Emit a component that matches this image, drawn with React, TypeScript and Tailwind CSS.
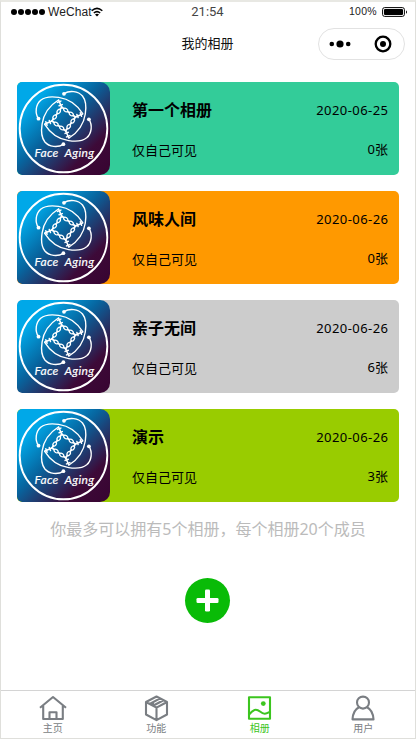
import React from "react";

type Album = { name: string; date: string; count: number; color: string };

const albums: Album[] = [
  { name: "第一个相册", date: "2020-06-25", count: 0, color: "bg-[#33cc99]" },
  { name: "风味人间", date: "2020-06-26", count: 0, color: "bg-[#ff9900]" },
  { name: "亲子无间", date: "2020-06-26", count: 6, color: "bg-[#cccccc]" },
  { name: "演示", date: "2020-06-26", count: 3, color: "bg-[#99cc00]" },
];

function Arm({ turn }: { turn: number }) {
  return (
    <g transform={`rotate(${turn})`}>
      <path d="M0.3 -25.3C6 -29 14.5 -28 18.8 -23C22 -19 22.7 -12 21.6 -5C20.4 3 16.5 12 5.3 19" strokeWidth="1.4" />
      <circle cx="0.3" cy="-25.2" r="1.9" fill="#fff" stroke="none" />
      <path d="M-5 -18.8L-2 -11.8" strokeWidth="1.6" />
      <path d="M-6.2 -16.6L-2.8 -17.9M-4.6 -13.2L-1.4 -14.4" strokeWidth="1.5" />
      <path d="M-2 -11.8L0 -10.4M3.9 -7.6L5.6 -6.4M9.5 -3.6L11.8 -2" strokeWidth="1.8" />
      <ellipse cx="2" cy="-9" rx="2.3" ry="1.5" transform="rotate(35 2 -9)" strokeWidth="1.3" />
      <ellipse cx="7.6" cy="-5" rx="2.3" ry="1.5" transform="rotate(35 7.6 -5)" strokeWidth="1.3" />
    </g>
  );
}

function Cover() {
  return (
    <div className="h-[93px] w-[93px] shrink-0 overflow-hidden rounded-l-[5px] rounded-r-[10px] bg-[linear-gradient(135deg,#00a8e8_20%,#07659f_45%,#3d0a38_76%,#370431_100%)]">
      <svg width="93" height="93" viewBox="0 0 93 93" fill="none" stroke="#fff" strokeLinecap="round">
        <circle cx="46.5" cy="46.5" r="43.8" strokeWidth="1.9" />
        <g transform="translate(46.7 37)">
          <Arm turn={0} />
          <Arm turn={90} />
          <Arm turn={180} />
          <Arm turn={270} />
        </g>
        <text
          x="17.5"
          y="74.6"
          fill="#fff"
          stroke="#fff"
          strokeWidth="0.2"
          fontSize="12"
          fontStyle="italic"
          textLength="59.5"
          wordSpacing="3"
          fontFamily="Lato, sans-serif"
        >
          Face Aging
        </text>
      </svg>
    </div>
  );
}

function AlbumCard({ album }: { album: Album }) {
  return (
    <div className={`flex h-[93px] overflow-hidden rounded-[5px] ${album.color}`}>
      <Cover />
      <div className="flex flex-1 justify-between pl-[22px] pr-[11px] text-black">
        <div className="flex flex-col pt-[17px]">
          <span className="text-[16px] font-bold leading-[22px]">{album.name}</span>
          <span className="mt-[19px] text-[13px] leading-[20px]">仅自己可见</span>
        </div>
        <div className="flex flex-col items-end pt-[18px] text-[13px] leading-5">
          <span className="-mr-[0.4px] tracking-[0.43px]">{album.date}</span>
          <span className="mt-[19px]">{album.count}张</span>
        </div>
      </div>
    </div>
  );
}

function StatusBar() {
  return (
    <div className="grid h-5 grid-cols-3 items-center pl-[10px] pr-[7px] font-['Liberation_Sans'] text-[12px] text-[#222]">
      <div className="flex items-center">
        <svg width="35" height="8" viewBox="0 0 35 8">
          <circle cx="3" cy="4" r="3" />
          <circle cx="10" cy="4" r="3" />
          <circle cx="17" cy="4" r="3" />
          <circle cx="24" cy="4" r="3" />
          <circle cx="31" cy="4" r="3" />
        </svg>
        <span className="ml-[2px] tracking-[0.1px]">WeChat</span>
        <svg className="-ml-px" width="12" height="10" viewBox="0 0 12 10" fill="none" stroke="#000" strokeWidth="1.5">
          <path d="M0.7 3.7Q6 -1 11.3 3.7M2.8 6Q6 3.2 9.2 6" />
          <path d="M4 7.4Q6 6 8 7.4L6 9.5Z" fill="#000" stroke="none" />
        </svg>
      </div>
      <span className="pr-1 text-center font-['Roboto'] text-[13px] text-[#444]">21:54</span>
      <div className="flex items-center justify-end">
        <span className="mr-[5px] text-[10.5px] tracking-[0.3px]">100%</span>
        <svg width="26" height="10" viewBox="0 0 26 10">
          <rect x="0.6" y="0.6" width="21.8" height="8.8" rx="2" fill="none" stroke="#000" />
          <rect x="2" y="2" width="19" height="6" rx="1" />
          <path d="M24 3.2Q26 5 24 6.8Z" />
        </svg>
      </div>
    </div>
  );
}

function NavBar() {
  return (
    <div className="grid h-[43px] grid-cols-[1fr_auto_1fr] items-center pl-[9px] pr-[10px]">
      <span />
      <span className="pb-[2px] text-[13px] leading-5 text-[#111]">我的相册</span>
      <div className="flex h-8 w-[87px] items-center justify-between justify-self-end rounded-full border border-[#e2e2e2] pl-[10px] pr-[12px]">
        <svg width="22" height="8" viewBox="0 0 22 8">
          <circle cx="2.8" cy="4" r="2.3" />
          <circle cx="11" cy="4" r="3.6" />
          <circle cx="19.2" cy="4" r="2.3" />
        </svg>
        <svg width="18" height="18" viewBox="0 0 18 18">
          <circle cx="9" cy="9" r="7.3" fill="none" stroke="#000" strokeWidth="2.3" />
          <circle cx="9" cy="9" r="3" />
        </svg>
      </div>
    </div>
  );
}

const tabs = [
  {
    label: "主页",
    active: false,
    icon: <path d="M1 12.8L14 2L27 12.8M4.2 10.5V24H23.8V10.5M10.5 24V17.2H17.5V24" />,
  },
  {
    label: "功能",
    active: false,
    icon: (
      <path d="M14.5 1.5L25 7V19.5L14.5 25.2L4 19.5V7ZM4 7L14.5 12.7L25 7M14.5 12.7V25.2M7.6 9L18.1 3.4M11 10.8L21.5 5.2M11 10.8V7.2" />
    ),
  },
  {
    label: "相册",
    active: true,
    icon: (
      <>
        <rect x="3" y="2.3" width="21" height="21.4" />
        <path d="M3 19.5C7 14.5 10 13.2 14 16.5S19.5 19 24 16.8" />
        <circle cx="17.3" cy="8.6" r="2.4" fill="currentColor" stroke="none" />
      </>
    ),
  },
  {
    label: "用户",
    active: false,
    icon: (
      <>
        <circle cx="14" cy="7.6" r="6" />
        <path d="M10 12.2C6 14.2 3.8 18.5 3.5 24.4H24.5C24.2 18.5 22 14.2 18 12.2" />
      </>
    ),
  },
];

function TabBar() {
  return (
    <div className="grid h-[48px] grid-cols-4 border-t border-[#d4d4d4]">
      {tabs.map((tab) => (
        <div
          key={tab.label}
          className={`flex flex-col items-center pt-1 ${tab.active ? "text-[#3cc51f]" : "text-[#7a7e83]"}`}
        >
          <svg
            width="28"
            height="27"
            viewBox="0 0 28 27"
            fill="none"
            stroke="currentColor"
            strokeWidth="2.1"
            strokeLinejoin="round"
          >
            {tab.icon}
          </svg>
          <span className="text-[10px] leading-[13px]">{tab.label}</span>
        </div>
      ))}
    </div>
  );
}

export default function App() {
  return (
    <div className="flex h-[739px] w-[416px] flex-col border-x border-b border-t-2 border-[#dfdfdb] border-t-[#e8e8e3] bg-white font-['Noto_Sans','Noto_Sans_CJK_SC',sans-serif]">
      <StatusBar />
      <NavBar />
      <main className="flex flex-1 flex-col pt-[17px]">
        <div className="flex flex-col gap-4 px-4">
          {albums.map((album) => (
            <AlbumCard key={album.name} album={album} />
          ))}
        </div>
        <p className="mt-[15px] text-center text-[16px] leading-6 text-[#bbb]">
          你最多可以拥有5个相册，每个相册20个成员
        </p>
        <button
          className="mr-px mt-[37px] flex h-[45px] w-[45px] items-center justify-center self-center rounded-full bg-[#09bb07]"
          aria-label="+"
        >
          <svg width="23" height="23" viewBox="0 0 23 23" fill="#fff">
            <rect x="0.5" y="9" width="22" height="5" rx="1.3" />
            <rect x="9" y="0.5" width="5" height="22" rx="1.3" />
          </svg>
        </button>
      </main>
      <TabBar />
    </div>
  );
}
